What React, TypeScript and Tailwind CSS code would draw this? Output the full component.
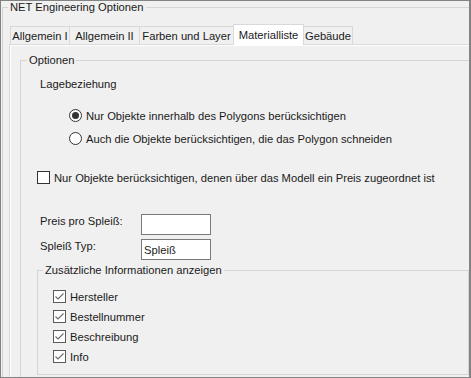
import React from "react";

const FONT = "font-['Liberation_Sans',Arial,sans-serif] text-[11.2px] leading-[14px] text-[#1a1a1a] whitespace-nowrap";

function Tab({ label, width, selected = false, first = false }: { label: string; width: string; selected?: boolean; first?: boolean }) {
    if (selected) {
        return (
            <div className={`relative z-10 -ml-px -mb-px h-[21px] ${width} flex justify-center pt-[3px] bg-white border-l border-t border-r border-[#d9d9d9]`}>
                {label}
            </div>
        );
    }
    return (
        <div className={`${first ? '' : '-ml-px'} h-[18px] ${width} flex items-center justify-center bg-[#f0f0f0] border-l border-t border-r border-[#d9d9d9]`}>
            {label}
        </div>
    );
}

function Radio({ checked }: { checked: boolean }) {
    return (
        <div className="w-[13px] h-[13px] shrink-0 rounded-full border border-[#333333] bg-white flex items-center justify-center">
            {checked && <div className="w-[7px] h-[7px] rounded-full bg-[#333333]" />}
        </div>
    );
}

function Check({ checked }: { checked: boolean }) {
    return (
        <div className={`w-[13px] h-[13px] shrink-0 border bg-white flex items-center justify-center ${checked ? 'border-[#5a5a5a]' : 'border-[#333333]'}`}>
            {checked && (
                <svg width="11" height="11" viewBox="0 0 11 11">
                    <path d="M1.5 5.5 L4 8 L9.5 2.5" fill="none" stroke="#6a6a6a" strokeWidth="1.1" />
                </svg>
            )}
        </div>
    );
}

const INFO_ITEMS = ['Hersteller', 'Bestellnummer', 'Beschreibung', 'Info'];

export default function App() {
    return (
        <div className={`${FONT} w-[471px] h-[378px] overflow-hidden bg-[#f0f0f0] border-l border-t border-b border-r-2 border-[#838383]`}>
            {/* NET Engineering Optionen group */}
            <div className="relative ml-px mt-[6px] w-[520px] h-[420px] border-l border-t border-[#d5d5d5]">
                <span className="absolute left-[5px] -top-[8px] px-[2px] bg-[#f0f0f0]">NET Engineering Optionen</span>

                {/* Tab strip */}
                <div className="flex items-end h-[20px] mt-[16px] pl-[7px]">
                    <Tab label="Allgemein I" width="w-[60px]" first />
                    <Tab label="Allgemein II" width="w-[71px]" />
                    <Tab label="Farben und Layer" width="w-[95px]" />
                    <Tab label="Materialliste" width="w-[71px]" selected />
                    <Tab label="Gebäude" width="w-[50px]" />
                </div>

                {/* Tab panel */}
                <div className="ml-[6px] border-l border-t border-[#d9d9d9]">
                    <div className="border-l border-t border-white pt-[14px] pl-[9px] h-[400px]">
                        {/* Optionen group */}
                        <div className="relative w-[520px] h-[400px] border-l border-t border-[#d5d5d5]">
                            <span className="absolute left-[6px] -top-[8px] px-[2px] bg-[#f0f0f0]">Optionen</span>

                            <div className="mt-[16px] pl-[19px]">Lagebeziehung</div>

                            <div className="mt-[18px] ml-[48px] flex items-center gap-[4px] h-[13px]">
                                <Radio checked />
                                <span>Nur Objekte innerhalb des Polygons berücksichtigen</span>
                            </div>
                            <div className="mt-[10px] ml-[48px] flex items-center gap-[4px] h-[13px]">
                                <Radio checked={false} />
                                <span>Auch die Objekte berücksichtigen, die das Polygon schneiden</span>
                            </div>

                            <div className="mt-[26px] ml-[16px] flex items-center gap-[4px] h-[13px]">
                                <Check checked={false} />
                                <span>Nur Objekte berücksichtigen, denen über das Modell ein Preis zugeordnet ist</span>
                            </div>

                            <div className="mt-[30px] ml-[19px] flex items-start">
                                <span className="w-[101px]">Preis pro Spleiß:</span>
                                <div className="w-[70px] h-[21px] border border-[#7a7a7a] bg-white" />
                            </div>
                            <div className="mt-[4px] ml-[19px] flex items-start">
                                <span className="w-[101px]">Spleiß Typ:</span>
                                <div className="w-[70px] h-[21px] border border-[#7a7a7a] bg-white flex items-center pl-[2px]">Spleiß</div>
                            </div>

                            {/* Zusätzliche Informationen group */}
                            <div className="relative mt-[10px] ml-[16px] w-[432px] h-[105px] border border-[#d5d5d5]">
                                <span className="absolute left-[5px] -top-[8px] px-[2px] bg-[#f0f0f0]">Zusätzliche Informationen anzeigen</span>
                                <div className="mt-[19px] ml-[15px] flex flex-col gap-[7px]">
                                    {INFO_ITEMS.map((item) => (
                                        <div key={item} className="flex items-center gap-[4px] h-[13px]">
                                            <Check checked />
                                            <span>{item}</span>
                                        </div>
                                    ))}
                                </div>
                            </div>
                        </div>
                    </div>
                </div>
            </div>
        </div>
    );
}
